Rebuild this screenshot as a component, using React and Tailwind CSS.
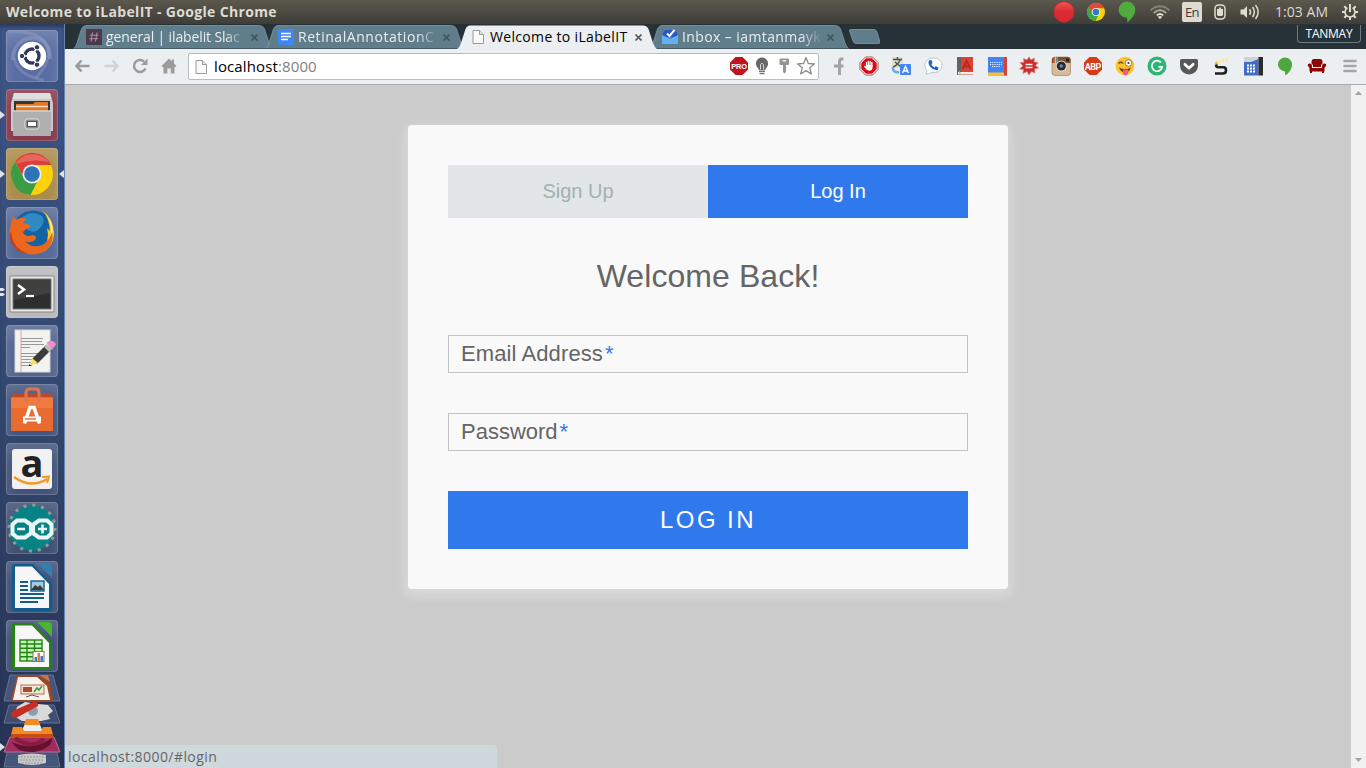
import React from "react";

const UI = "font-['Open_Sans','Noto_Sans',sans-serif]";

function Svg({ w = 20, h = 20, vb, children, className = "" }) {
  return (
    <svg width={w} height={h} viewBox={vb || `0 0 ${w} ${h}`} className={`block shrink-0 ${className}`}>
      {children}
    </svg>
  );
}

function ChromeLogo({ size }) {
  return (
    <Svg w={size} h={size} vb="0 0 42 42">
      <circle cx="21" cy="21" r="21" fill="#fcd209" />
      <path d="M3 10 A21 21 0 0 1 39.8 12 H21 L13 26Z" fill="#dd4b3e" />
      <path d="M3 10 L13 25.5 Q18 31 26 30 L20 42 A21 21 0 0 1 3 10Z" fill="#3fa648" />
      <circle cx="21" cy="21" r="9.6" fill="#f4f4f4" />
      <circle cx="21" cy="21" r="7.6" fill="#2f78c2" />
    </Svg>
  );
}

function HangoutsBalloon() {
  return (
    <Svg w={18} h={22}>
      <path d="M9 .5a8.3 8.3 0 0 0-8.3 8.4C.7 13 4.500 16.500 9 16.600L9.400 21.500C13 18 17.300 14 17.300 8.900A8.300 8.300 0 0 0 9 .5Z" fill="#4fab3e" />
    </Svg>
  );
}

/* ---------- system panel ---------- */
function Panel() {
  return (
    <div className={`flex h-6 shrink-0 items-center justify-between bg-linear-to-b from-[#5b584d] to-[#3e3d38] pl-[6px] text-[#dfdbd2] ${UI}`}>
      <span className="text-[14px] font-bold leading-6 tracking-[0.33px] whitespace-nowrap">Welcome to iLabelIT - Google Chrome</span>
      <div className="flex h-6 items-center">
        <Svg w={22} h={22} className="mr-[12px]">
          <defs>
            <linearGradient id="rec" x1="0" y1="0" x2="0" y2="1">
              <stop offset="0" stopColor="#ef5557" />
              <stop offset=".5" stopColor="#d92a30" />
              <stop offset="1" stopColor="#d62b33" />
            </linearGradient>
          </defs>
          <circle cx="11" cy="11" r="10.4" fill="url(#rec)" stroke="#a82828" strokeWidth=".6" />
        </Svg>
        <span className="mr-[13px]"><ChromeLogo size={18} /></span>
        <span className="mr-[14px]"><HangoutsBalloon /></span>
        <Svg w={20} h={16} className="mr-[12px]">
          <g fill="none" stroke="#85827a" strokeWidth="1.8">
            <path d="M.6 6.2Q10-1.8 19.4 6.2" />
            <path d="M3.8 9Q10 3.6 16.2 9" stroke="#aaa79e" />
            <path d="M6.8 11.4Q10 8.6 13.2 11.4" stroke="#dfdbd2" />
          </g>
          <path d="M7.8 12.8Q10 11 12.2 12.8L10 15.2Z" fill="#dfdbd2" />
        </Svg>
        <span className="mr-[12px] flex h-5 w-5 items-center justify-center rounded-[2px] bg-[#dfdbd2] text-[13px] leading-5 tracking-[-0.5px] text-[#3c3b37]">En</span>
        <Svg w={12} h={16} className="mr-[14px]">
          <rect x="1" y="1" width="10" height="14" rx="3.500" fill="none" stroke="#dfdbd2" strokeWidth="1.500" />
          <path d="M3 5H5V3.500H7V5H9V11L8 12H4L3 11Z" fill="#dfdbd2" />
        </Svg>
        <Svg w={20} h={16} className="mr-[15px]">
          <path d="M.5 5.5H3.5L7 2V14L3.5 10.5H.5Z" fill="#dfdbd2" />
          <g fill="none" stroke="#dfdbd2" strokeWidth="1.5">
            <path d="M9.5 5.2Q11.7 8 9.5 10.8" />
            <path d="M12.5 3Q16.2 8 12.5 13" />
            <path d="M15.5 1Q20.8 8 15.5 15" />
          </g>
        </Svg>
        <span className="w-[55px] text-[14px] leading-6 tracking-[0.05px] whitespace-nowrap">1:03 AM</span>
        <Svg w={16} h={16} className="mr-[8px] ml-[12px]">
          <g stroke="#dfdbd2" strokeWidth="2">
            <path d="M8 0V8M8 13V16M0 8H3M13 8H16M2.300 2.300L4.500 4.500M11.500 11.500L13.700 13.700M13.700 2.300L11.500 4.500M4.500 11.500L2.300 13.700" />
          </g>
          <path d="M5.400 3.800A5 5 0 1 0 10.600 3.800" fill="none" stroke="#dfdbd2" strokeWidth="1.600" />
        </Svg>
      </div>
    </div>
  );
}

/* ---------- launcher ---------- */
const doc = (stroke, corner) => (
  <>
    <path d="M9 3H27L46 23V47Q46 50 43 50H9Q6 50 6 47V6Q6 3 9 3Z" fill={stroke} />
    <path d="M9 5.5H26L43 23V47H9Z" fill="#f7f7f7" />
    <path d="M31 2H42Q46 2 46 6V17Z" fill={corner} />
  </>
);

const launcherItems = [
  {
    tile: "bg-[#5a6da2]",
    art: (
      <>
        <path d="M7 30C6 12 24 3 35 10Q44 14 44 29" fill="none" stroke="#8997bf" strokeWidth="4" opacity=".6" />
        <path d="M2 2Q32 0 40 14T30 48" fill="none" stroke="#9aa6ca" strokeWidth="3" opacity=".35" />
        <path d="M8 28Q12 46 38 50" fill="none" stroke="#8997bf" strokeWidth="3" opacity=".5" />
        <circle cx="26" cy="26" r="14.2" fill="#fff" />
        <circle cx="26" cy="26" r="7" fill="none" stroke="#30395d" strokeWidth="3.4" />
        <g stroke="#fff" strokeWidth="1.6"><path d="M26 26H15M26 26L31.5 16.5M26 26L31.5 35.5" /></g>
        <circle cx="26" cy="26" r="5.2" fill="#fff" />
        <g fill="#30395d" stroke="#fff" strokeWidth="1"><circle cx="16" cy="26" r="2.7" /><circle cx="31" cy="17.3" r="2.7" /><circle cx="31" cy="34.7" r="2.7" /></g>
      </>
    ),
  },
  {
    tile: "bg-[#863a4c]",
    left: 1,
    art: (
      <>
        <path d="M8 4H44L47 14V42H5V14Z" fill="#c9c9c9" />
        <path d="M8 4H44L45.5 10H6.5Z" fill="#dedede" />
        <rect x="8" y="12" width="36" height="11" fill="#373737" />
        <path d="M10 15H27L29 13H42V23H10Z" fill="#e47824" />
        <path d="M10 17.5H42" stroke="#f6e6c8" strokeWidth="1.4" />
        <rect x="7" y="21.500" width="38" height="25.500" rx="1" fill="#b0b0b0" />
        <path d="M7 22H45" stroke="#e4e4e4" />
        <rect x="19" y="30" width="14" height="10" rx="2.5" fill="#8d8d8d" stroke="#dedede" />
        <rect x="21.5" y="32.5" width="9" height="5" fill="#fff" stroke="#515151" />
      </>
    ),
  },
  {
    tile: "bg-[#ab8c4b]",
    left: 1,
    right: true,
    art: (
      <>
        <circle cx="26" cy="26" r="21" fill="#fdd10b" />
        <path d="M9 13.7A21 21 0 0 1 45.2 17H26L17 28Z" fill="#dc3e38" />
        <path d="M9 13.7L18 30Q21 35 31 34L24.5 47A21 21 0 0 1 9 13.7Z" fill="#3c9c43" />
        <path d="M9 16A21 21 0 0 1 43 14Q26 10 9 16Z" fill="#f08c86" opacity=".5" />
        <circle cx="26" cy="26" r="9.5" fill="#f1f1f1" />
        <circle cx="26" cy="26" r="7.8" fill="#2d74b8" />
      </>
    ),
  },
  {
    tile: "bg-[#566a98]",
    art: (
      <>
        <circle cx="27" cy="24" r="20.500" fill="#1362a2" />
        <path d="M15 12Q24 2 36 9Q40 15 34 21Q28 29 18 20Z" fill="#41a5d6" opacity=".6" />
        <path d="M37 4Q48 12 48 27Q47 42 34 46Q45 34 41 21L44 24Q43 11 37 4Z" fill="#ffc61f" />
        <path d="M41 9Q47 18 44 32L47 25Q46 14 41 9Z" fill="#fff2a3" />
        <path d="M7 9Q8 13 12 12Q16 9 20 12L17 16L24 18Q25 21 20 22L17 25Q19 31 27 28Q32 29 29 33Q24 37 19 34Q26 42 36 38Q43 35 46 25Q49 39 37 45Q25 51 13 43Q0 33 5 17Z" fill="#ec671d" />
        <path d="M5 24Q6 42 23 47Q10 46 5 35Q3 29 5 24Z" fill="#c33d18" />
      </>
    ),
  },
  {
    tile: "bg-[#b9b9bd]",
    left: 2,
    art: (
      <>
        <rect x="4" y="10" width="44" height="36" rx="1" fill="#e7e7e7" stroke="#858585" />
        <rect x="7" y="13" width="38" height="30" fill="#2e2e2e" stroke="#777" />
        <path d="M8 14H44V27L8 34Z" fill="#4c4c4c" opacity=".6" />
        <path d="M12 19L18 23.5L12 28" fill="none" stroke="#fff" strokeWidth="2.6" />
        <path d="M20 30H28" stroke="#fff" strokeWidth="2.2" />
      </>
    ),
  },
  {
    tile: "bg-[#54668f]",
    art: (
      <>
        <rect x="9" y="5" width="35" height="42" fill="#f2f2ef" stroke="#d5d5d5" />
        <path d="M15 5V47" stroke="#efa3a3" />
        <g stroke="#999"><path d="M15 13.500H37M15 16.500H36M15 19.500H38M15 22.500H24M15 28.500H36M15 31.500H34M15 34.500H30M15 37.500H26M15 40.500H24" /></g>
        <path d="M26 34L40 20L45 25L31 39Z" fill="#3b3b39" />
        <path d="M38 22L41 19L46 24L43 27Z" fill="#bdbdb6" />
        <path d="M42 18Q46 15 49 19L46 23Z" fill="#ef8eca" stroke="#ef8eca" strokeWidth="2" />
        <path d="M26 33L32 38L24 41Z" fill="#f2e16a" /><path d="M23 39L26 41H23Z" fill="#111" />
      </>
    ),
  },
  {
    tile: "bg-[#44567f]",
    art: (
      <>
        <path d="M7 9L5 16H47L45 9Z" fill="#b9492a" />
        <rect x="5" y="13" width="42" height="34" rx="1" fill="#e96b30" />
        <rect x="5" y="14" width="42" height="10" fill="#f38650" opacity=".6" />
        <path d="M20 18V9Q20 5 24 5H30Q33 5 33 9V18" fill="none" stroke="#e2754f" strokeWidth="3" />
        <path d="M18.500 39.500L24 23.500H28L33.500 39.500" fill="none" stroke="#fff" strokeWidth="3.500" />
        <path d="M17 35H35" stroke="#fff" strokeWidth="5" />
        <path d="M19 35H30" stroke="#e96b30" strokeWidth="1.400" />
      </>
    ),
  },
  {
    tile: "bg-[#435379]",
    art: (
      <>
        <rect x="6" y="6" width="40" height="40" rx="3" fill="#f1f1f1" />
        <text x="26" y="33.500" textAnchor="middle" fontFamily="Open Sans" fontWeight="700" fontSize="38" fill="#222">a</text>
        <path d="M8 34Q25 46 41 36" fill="none" stroke="#f7981d" strokeWidth="2.6" />
        <path d="M36 34L43 33.5L41 40" fill="none" stroke="#f7981d" strokeWidth="2" />
      </>
    ),
  },
  {
    tile: "bg-[#414f73]",
    art: (
      <>
        <circle cx="26" cy="26" r="23" fill="#078385" />
        <circle cx="26" cy="26" r="23" fill="none" stroke="#8f9c98" strokeWidth="3" strokeDasharray="3 6" />
        <path d="M24 22L19 18.500H11L6.500 22.500V31.500L11 35.500H19L24 32L26 29L28 32L33 35.500H41L45.500 31.500V22.500L41 18.500H33L28 22L26 25Z" fill="#078385" stroke="#eaf6f6" strokeWidth="4" />
        <path d="M23 24H29V30H23Z" fill="#eaf6f6" />
        <path d="M11 27H19M32 27H41M36.500 22.500V31.500" stroke="#eaf6f6" strokeWidth="2.6" />
      </>
    ),
  },
  {
    tile: "bg-[#3f4f77]",
    art: (
      <>
        {doc("#135b8c", "#347eae")}
        <path d="M14 21H22M14 25H22M14 29H22M14 33H38M14 37H38M14 41H32" stroke="#135b8c" strokeWidth="2" />
        <rect x="25" y="20" width="13" height="10" fill="#9fcbe4" stroke="#135b8c" strokeWidth="1.4" />
        <path d="M25 29L29 24L32 26L34 24L38 29Z" fill="#3c3b31" />
      </>
    ),
  },
  {
    tile: "bg-[#3f4f75]",
    art: (
      <>
        {doc("#238414", "#4ab436")}
        <rect x="14" y="20" width="22" height="21" fill="#c6f3b5" stroke="#238414" strokeWidth="1.4" />
        <path d="M14 24H36M14 28.3H36M14 32.5H36M14 36.7H36M21 20V41M28.5 20V41" stroke="#238414" strokeWidth="1.4" />
        <rect x="27" y="31.500" width="11" height="10" fill="#fff" stroke="#777" />
        <rect x="28.500" y="37" width="2.600" height="4" fill="#3b7fc0" /><rect x="31.500" y="33" width="2.600" height="8" fill="#ef7d1d" /><rect x="34.500" y="36" width="2.600" height="5" fill="#3b7fc0" />
      </>
    ),
  },
];

function Launcher() {
  return (
    <aside className="relative flex w-[65px] shrink-0 flex-col gap-[7px] border-r border-[#6b82ac] bg-linear-to-b from-[#3e5687] via-[#33486f] via-50% to-[#263252] pt-[6px] shadow-[inset_0_4px_4px_-2px_#243256]">
      {launcherItems.map((it, i) => (
        <div key={i} className="relative ml-[6px] h-[52px] w-[52px] shrink-0">
          <div className={`h-full w-full rounded-[4px] shadow-[inset_0_0_0_1px_rgba(255,255,255,0.16),inset_0_10px_14px_rgba(255,255,255,0.16)] ${it.tile}`}>
            <Svg w={52} h={52}>{it.art}</Svg>
          </div>
          {it.left === 1 && <Svg w={5} h={8} className="absolute top-[22px] -left-[6px]"><path d="M0 0L5 4L0 8Z" fill="#dfe2e8" /></Svg>}
          {it.left === 2 && <Svg w={5} h={8} className="absolute top-[22px] -left-[6px]"><path d="M0 0H3L5 1.500L3 3H0ZM0 5H3L5 6.500L3 8H0Z" fill="#dfe2e8" /></Svg>}
          {it.right && <Svg w={5} h={8} className="absolute top-[22px] left-[53px]"><path d="M5 0L0 4L5 8Z" fill="#dfe2e8" /></Svg>}
        </div>
      ))}
      <Svg w={64} h={96} className="-mt-[6px]">
        <path d="M10 65H54L60 94H4Z" fill="#46557b" stroke="#65738f" />
        <path d="M18 82Q32 79 46 82V90Q32 94 18 90Z" fill="#c9c9c9" /><path d="M18 84H46M20 87H44M22 90H42" stroke="#999" strokeDasharray="2 1" />
        <path d="M9 32H54L60 50H4Z" fill="#3f4e73" stroke="#65738f" />
        <path d="M17 34L25 29L38 31L48 32L53 38L48 42L50 46L41 48L22 48L14 43Z" fill="#dadada" />
        <circle cx="33" cy="38" r="5" fill="#909aaf" />
        <path d="M12 44Q9 39 15 37L33 29Q39 28 38 33L16 45Z" fill="#c72c25" />
        <path d="M10 64H54L60 79H4Z" fill="#a32c5e" stroke="#c56a91" />
        <path d="M12 69Q32 79 52 65Q53 75 34 79Q17 80 12 69Z" fill="#64102f" /><path d="M15 65Q32 77 44 66" fill="none" stroke="#8d1b40" strokeWidth="4" />
        <path d="M27 47H38L43 59H21Z" fill="#eee" /><path d="M26 46H38L40 52H24Z" fill="#f28a25" />
        <path d="M13 54H22L24 58H41L43 54H51L53 62H11Z" fill="#f18a24" /><path d="M11 61H53V64H12Z" fill="#c64c12" />
        <path d="M10 2H53L60 28H4Z" fill="#45557c" stroke="#65738f" />
        <path d="M17 2H41L50 10L53 26Q53 29 49 29H14Q10 29 11 26Z" fill="#9a4727" />
        <path d="M18 4H37L47 13L50 27H13Z" fill="#f6f3ef" /><path d="M39 2H48L50 9Z" fill="#bf7552" />
        <rect x="21" y="12" width="23" height="9" fill="#fbe4d5" stroke="#c06a48" /><rect x="23" y="14" width="9" height="5" fill="#a64d2c" /><path d="M34 19L37 15L39 17L42 13" fill="none" stroke="#2e9b45" strokeWidth="1.500" /><path d="M26 24L32 22L39 24" fill="none" stroke="#555" />
        <path d="M0 70L5 74L0 78Z" fill="#dfe2e8" />
      </Svg>
    </aside>
  );
}

/* ---------- browser tabs ---------- */
const PageIcon = () => (
  <Svg w={16} h={16}>
    <path d="M3 1.500H9.500L13.500 5.500V14.500H3Z" fill="#fafafa" stroke="#999" />
    <path d="M9.500 1.500V5.500H13.500" fill="#e6e6e6" stroke="#999" />
  </Svg>
);

const tabs = [
  {
    title: "general | ilabelit Slac",
    track: "tracking-[-0.13px]",
    icon: (
      <Svg w={16} h={16}>
        <rect width="16" height="16" fill="#4d394b" />
        <path d="M6.500 3.500L5 12.500M11 3.500L9.500 12.500M3.800 6.200H12.500M3.300 9.700H12" stroke="#a58fa3" strokeWidth="1.100" />
      </Svg>
    ),
  },
  {
    title: "RetinalAnnotationC",
    track: "tracking-[0.55px]",
    icon: (
      <Svg w={16} h={16}>
        <rect width="16" height="16" rx="1.500" fill="#4285f4" />
        <path d="M3 4.500H13M3 7.500H13M3 10.500H10" stroke="#fff" strokeWidth="1.400" />
      </Svg>
    ),
  },
  { title: "Welcome to iLabelIT", active: true, track: "tracking-[0.33px]", icon: <PageIcon /> },
  {
    title: "Inbox – iamtanmayk",
    track: "tracking-[0.4px]",
    icon: (
      <Svg w={16} h={16}>
        <path d="M0 6L3 1H13L16 6V8H0Z" fill="#2a56c6" />
        <path d="M0 6L8 10L16 6V14Q16 15 15 15H1Q0 15 0 14Z" fill="#63b0f5" />
        <path d="M5 4.500L7.500 7L12.500 1" fill="none" stroke="#fff" strokeWidth="2" />
      </Svg>
    ),
  },
];

function Tab({ tab }) {
  const a = tab.active;
  return (
    <div className={`relative -mr-[8px] h-6 w-[200px] shrink-0 ${a ? "z-10" : ""}`}>
      <Svg w={200} h={24} className="absolute inset-0">
        <path d="M0 24C2 23 3 21 4 18L8.500 4Q10 .5 13 .5H186Q190 .5 191.500 4L196 18Q198 23 200 24Z" fill={a ? "#eceff1" : "#607d8b"} stroke={a ? "none" : "#8399a4"} strokeWidth=".8" />
        {!a && <path d="M0 23.500H200" stroke="#455a64" />}
      </Svg>
      <div className="relative flex h-6 items-center pl-[13px]">
        {tab.icon}
        <span className={`ml-[4px] w-[140px] text-[14px] leading-6 whitespace-nowrap ${tab.track} ${UI} ${a ? "text-black" : "mask-r-from-85% text-[#e9eef0]"}`}>{tab.title}</span>
        <Svg w={9} h={9} className="ml-[4px]">
          <path d="M1.500 1.500L7.500 7.500M7.500 1.500L1.500 7.500" stroke={a ? "#555" : "#40535d"} strokeWidth="1.700" />
        </Svg>
      </div>
    </div>
  );
}

function TabStrip() {
  return (
    <div className="flex h-[25px] shrink-0 bg-[#263238] pt-px pl-[8px]">
      {tabs.map((t) => <Tab key={t.title} tab={t} />)}
      <Svg w={32} h={16} className="mt-[4px] ml-[7px]">
        <path d="M3 .5H26Q28 .5 29 3L32 13Q32.500 14.500 30 14.500H8Q6 14.500 5 12L1.500 2Q1 .5 3 .5Z" fill="#607d8b" stroke="#8399a4" strokeWidth=".8" />
      </Svg>
      <div className={`mr-[5px] ml-auto flex h-[18px] w-[64px] items-center justify-center rounded-b-[4px] border border-t-0 border-[#6c7a82] bg-[#263238] text-[12px] tracking-[-0.25px] text-white ${UI}`}>TANMAY</div>
    </div>
  );
}

/* ---------- toolbar ---------- */
const extensions = [
  <path key="f" d="M11 19V11.500H7V8.500H11V6.500Q11 1.500 14.500 1.500H16.500V4.500H15Q14 4.500 14 6.500V8.500H16.500V11.500H14V19Z" fill="#a3a3a3" />,
  <g key="hand">
    <path d="M6.500 1H13.500L19 6.500V13.500L13.500 19H6.500L1 13.500V6.500Z" fill="#fff" stroke="#8d2a2a" strokeWidth=".8" />
    <path d="M7 2.300H13L17.700 7V13L13 17.700H7L2.300 13V7Z" fill="#dc0c12" />
    <path d="M7.500 10V6.500M9.300 9V5.300M11.100 9V5.300M12.900 10V6.500M5.800 10.500L8 13" stroke="#fff" strokeWidth="1.300" strokeLinecap="round" />
    <path d="M6.900 9H13.500V12Q13 14.800 10.300 14.800Q8 14.800 6.900 12Z" fill="#fff" />
  </g>,
  <g key="tr">
    <rect x="1" y="1" width="11" height="11" fill="#e4dfc9" />
    <path d="M2 3.500H11M6.500 1V3.500M9 4Q7 9 2 11M4 6L10 11" stroke="#46505c" strokeWidth="1.400" fill="none" />
    <path d="M2 11V13Q3 17 8 16" fill="none" stroke="#6ca6ed" strokeWidth="2.500" />
    <rect x="9" y="8" width="11" height="11" rx="1" fill="#4285f4" />
    <path d="M11.500 17L14.500 10.500L17.500 17M12.500 15H16.500" fill="none" stroke="#fff" strokeWidth="1.400" />
  </g>,
  <g key="ph">
    <path d="M10 2C15.500 2 19 5 19 9.300S15.500 17 10 16.500L3 18L4 14.500C-1 9 3 2 10 2Z" fill="#fff" stroke="#bcc6d2" />
    <path d="M6 4.500L8.500 4L9.500 7L8.300 8Q9 10.500 11.500 11.500L12.700 10.300L15.500 11.500L15 13.800Q11 15 7.500 11Q4.500 7.500 6 4.500Z" fill="#1d62c6" />
  </g>,
  <g key="bk">
    <path d="M2 1H18V19H2Z" fill="#db4437" /><path d="M2 1H6V19H2Z" fill="#626262" />
    <path d="M7.500 13L11.500 4.500L15.500 13M9 10.500H14" fill="none" stroke="#b8281f" strokeWidth="1.800" />
    <path d="M3 16H18V18.500H3Z" fill="#f1eeee" /><path d="M4 14.500V19L6 17.500Z" fill="#fbb91c" />
  </g>,
  <g key="kb">
    <rect x="1" y="1" width="19" height="18.500" fill="#4285f4" /><path d="M1 16.500H17V19.500H1Z" fill="#fbc02d" /><path d="M17 1H20V19.500H17Z" fill="#d44336" />
    <path d="M3 6.500H15M3 8.500H15M5 10.500H13" stroke="#e8f0fe" strokeWidth="1.100" strokeDasharray="1 .8" />
  </g>,
  <g key="sp">
    <path d="M10 1L12 4L15.500 2L15 6L19 6.500L16.500 9.500L19.500 12L15.500 13L16 17L12.500 15.500L10 19L8 15.500L4 17.500L4.500 13.500L.5 13L4 10L1 6.500L5 6.500L4.500 2.500L8 4Z" fill="#c92d2d" stroke="#de7b72" strokeWidth=".7" />
    <path d="M6.500 8.500H13.500M6.500 11.500H13.500" stroke="#fff0ea" strokeWidth="1.500" />
  </g>,
  <g key="ig">
    <rect x="1" y="1" width="18.500" height="18.500" rx="3" fill="#d8b99a" stroke="#94755b" strokeWidth=".6" /><path d="M1 7V4Q1 1 4 1H16.500Q19.500 1 19.500 4V7Z" fill="#7d5134" />
    <path d="M3 1.200V7" stroke="#e84a3f" strokeWidth="1.500" /><path d="M4.500 1V7" stroke="#f2c22b" strokeWidth="1.500" /><path d="M6.200 1V7" stroke="#3fb1c6" strokeWidth="1.500" />
    <circle cx="10.300" cy="10" r="5.500" fill="#e8ddd0" /><circle cx="10.300" cy="10" r="4.600" fill="#272a2f" /><circle cx="10.300" cy="10" r="1.800" fill="#6a88a5" /><rect x="15" y="2.500" width="3" height="3" fill="#2d201b" />
  </g>,
  <g key="abp">
    <path d="M6.500 1H13.500L19 6.500V13.500L13.500 19H6.500L1 13.500V6.500Z" fill="#d63a17" />
    <text x="9.800" y="13.500" textAnchor="middle" fontFamily="Roboto" fontWeight="700" fontSize="9" letterSpacing="-.5" fill="#fff">ABP</text>
  </g>,
  <g key="em">
    <circle cx="10" cy="10" r="9.300" fill="#fcc32c" /><circle cx="13.500" cy="7" r="3.300" fill="#fff" stroke="#8f5c17" strokeWidth=".8" /><circle cx="13.500" cy="7" r="1.100" fill="#333" />
    <path d="M3.500 7.500Q6 5 8 7.500" fill="none" stroke="#774818" strokeWidth="1.300" /><path d="M4 11.500Q10 14.500 16 11.500Q14 17 10 16.500Q6 16.500 4 11.500Z" fill="#7c3b15" /><path d="M8 13.500H13V17Q12.500 19.500 10.500 19.500T8 17Z" fill="#ef5b83" />
  </g>,
  <g key="gr">
    <circle cx="10" cy="10" r="9.500" fill="#2bb673" />
    <path d="M14 6.500A5.200 5.200 0 1 0 12.500 14.600Q15 13.500 15 10.800H11.500" fill="none" stroke="#fff" strokeWidth="1.800" />
  </g>,
  <g key="pk">
    <path d="M2.500 3H17.500Q19 3 19 4.500V10A9 8.500 0 0 1 1 10V4.500Q1 3 2.500 3Z" fill="#585858" />
    <path d="M5.800 8.200L10 12.200L14.200 8.200" fill="none" stroke="#fff" strokeWidth="2.600" strokeLinecap="round" strokeLinejoin="round" />
  </g>,
  <g key="s">
    <path d="M5.200 7.500V9.500Q5.200 11.200 7.500 11.200H12.500Q15 11.200 15 14.300Q15 17.500 12 17.500H4" fill="none" stroke="#202020" strokeWidth="2.600" />
    <path d="M4 6.500L6.500 5V8L4 9Z" fill="#f4b921" /><path d="M7.500 3.500H9.500V7.500H7.500ZM11 2.500H13V6.500H11ZM14.500 1.500H16.500V6H14.500Z" fill="#f6eaa0" />
  </g>,
  <g key="ca">
    <rect x="1" y="1" width="14.500" height="18.500" fill="#3d6fc8" /><path d="M1 1H15.500V3L8 6H1Z" fill="#cfd3d6" /><rect x="15.500" y="1" width="4.500" height="18.500" fill="#2b2b2d" />
    <path d="M4 9.500H12M4 12.500H12M4 15.500H12" stroke="#fff" strokeWidth="2" strokeDasharray="2 1" />
  </g>,
  <path key="ho" d="M10 1.500A7 7 0 0 0 3 8.500C3 12 6 14.800 9.700 15.200L10.500 19.500C13.500 17 17 13.500 17 8.500A7 7 0 0 0 10 1.500Z" fill="#4fa83d" />,
  <g key="so" fill="#8c0606">
    <path d="M4.500 7.500Q4 3 7 3H13Q16 3 15.500 7.500L14 9V11H6V9Z" /><path d="M.7 9.500Q.5 7.300 3 7.500Q5 7.700 5 10V12H15V10Q15 7.700 17 7.500Q19.500 7.300 19.300 9.500L17.500 12V15.500H2.500V12Z" />
    <path d="M3 15H5V17H3ZM15 15H17V17H15Z" /><path d="M5 11.500H15" stroke="#eceff1" strokeWidth=".8" />
  </g>,
];

function Toolbar() {
  return (
    <div className="flex h-9 shrink-0 items-center border-b border-[#a9abad] bg-[#eceff1] pb-px pl-[7px]">
      <Svg w={20} h={20} className="mr-[9px]"><path d="M9.500 4.500L4.500 10L9.500 15.500M5 10H17.500" fill="none" stroke="#9b9b9b" strokeWidth="2.600" /></Svg>
      <Svg w={20} h={20} className="mr-[9px]"><path d="M11.500 4.500L16.500 10L11.500 15.500M16 10H3.500" fill="none" stroke="#d0d3d4" strokeWidth="2.400" /></Svg>
      <Svg w={20} h={20} className="mr-[9px]"><path d="M15.500 12.500A6 6 0 1 1 14 5.500" fill="none" stroke="#9b9b9b" strokeWidth="2.500" /><path d="M17.500 2.500V9H11Z" fill="#9b9b9b" /></Svg>
      <Svg w={20} h={20} className="mr-[9px]"><path d="M10 2.500L12.800 5.300V3.500H15V7.500L17.500 10L16.500 11H15.500V17.500H11.700V12.500H8.300V17.500H4.500V11H3.500L2.500 10Z" fill="#9b9b9b" /></Svg>
      <div className="mt-px flex h-[27px] w-[631px] shrink-0 items-center rounded-[2px] border border-[#b9bcbe] bg-white pl-[4px]">
        <PageIcon />
        <span className={`-mt-px ml-[5px] flex-1 text-[15px] tracking-[0.12px] text-black ${UI}`}>localhost<span className="text-[#808080]">:8000</span></span>
        <Svg w={20} h={20} className="-mt-px mr-[3px]">
          <path d="M6.500 1H13.500L19 6.500V13.500L13.500 19H6.500L1 13.500V6.500Z" fill="#c1131e" />
          <text x="10" y="12.700" textAnchor="middle" fontFamily="Liberation Sans" fontSize="7.500" fontWeight="700" letterSpacing="-.3" fill="#fff">PRO</text>
        </Svg>
        <Svg w={20} h={20} className="-mt-px mr-[2px]">
          <path d="M10 1.500A6 6 0 0 1 14.500 11.500L13 14H7L5.500 11.500A6 6 0 0 1 10 1.500Z" fill="#686868" /><path d="M8.500 13.500V8.500Q10 6 11.500 8.500V13.500" fill="none" stroke="#d8d8d8" /><path d="M7 15.300H13M7.500 17.500H12.500" stroke="#777" strokeWidth="1.600" />
        </Svg>
        <Svg w={20} h={20} className="-mt-px mr-[2px]">
          <path d="M6.500 2.500H14Q15 2.500 15 4V8Q15 9 13.500 9H12V16L10.500 17.500L9 16V9H7Q5.500 9 5.500 8V4Q5.500 2.500 6.500 2.500Z" fill="#969696" /><path d="M8.500 4.800H12" stroke="#fff" strokeWidth="1.300" />
        </Svg>
        <Svg w={20} h={20} className="-mt-px mr-[2px]">
          <path d="M10 1.500L12.300 7.500L18.500 7.800L13.800 11.800L15.300 18L10 14.600L4.700 18L6.200 11.800L1.500 7.800L7.700 7.500Z" fill="#fff" stroke="#8b8b8b" strokeWidth="1.300" strokeLinejoin="round" />
        </Svg>
      </div>
      <div className="ml-[8px] flex gap-[12px]">
        {extensions.map((e, i) => <Svg key={i} w={20} h={20}>{e}</Svg>)}
      </div>
      <Svg w={14} h={14} className="ml-[16px]">
        <path d="M1.500 2H12.500M1.500 7H12.500M1.500 12H12.500" stroke="#a5a5a5" strokeWidth="2.600" strokeLinecap="round" />
      </Svg>
    </div>
  );
}

/* ---------- page ---------- */
function Field({ label, className = "" }) {
  return (
    <div className={`mt-[40px] h-[38px] border border-[#c3c3c3] pl-[12px] text-[22px] leading-[36px] text-[#656565] ${className}`}>
      {label}<span className="ml-[2px] tracking-normal text-[#3079ed]">*</span>
    </div>
  );
}

function LoginPage() {
  return (
    <div className="relative flex min-h-0 flex-1 bg-[#cbcbcb] font-['Liberation_Sans',Arial,sans-serif]">
      <main className="flex flex-1 justify-center pt-[40px]">
        <section className="flex h-[464px] w-[600px] flex-col rounded-[4px] bg-[#f9f9f9] p-[40px] shadow-[0_4px_10px_4px_rgba(248,248,248,0.3)]">
          <div className="flex h-[53px] text-[20px] leading-[53px]">
            <div className="flex-1 bg-[#e2e6e6] text-center text-[#a0b3b0]">Sign Up</div>
            <div className="flex-1 bg-[#3079ed] text-center text-white">Log In</div>
          </div>
          <h1 className="mt-[40px] text-center text-[32px] leading-[37px] tracking-[0.08px] text-[#656565]">Welcome Back!</h1>
          <Field label="Email Address" className="tracking-[0.1px]" />
          <Field label="Password" />
          <button className="mt-[40px] h-[58px] bg-[#3079ed] text-[24px] leading-[58px] tracking-[2.4px] text-white">LOG IN</button>
        </section>
      </main>
      <div className="flex w-[15px] flex-col items-center justify-between bg-[#f1f1f1] py-[5px]">
        <Svg w={7} h={5}><path d="M0 5L3.500 1L7 5Z" fill="#a3a3a3" /></Svg>
        <Svg w={7} h={5}><path d="M0 0L3.500 4L7 0Z" fill="#a3a3a3" /></Svg>
      </div>
      <div className={`absolute bottom-0 left-0 h-[23px] w-[432px] rounded-tr-[4px] bg-[#cfd8dc] pl-[3px] text-[14px] leading-[24px] tracking-[0.43px] text-[#666] ${UI}`}>localhost:8000/#login</div>
    </div>
  );
}

export default function App() {
  return (
    <div className="flex h-[768px] w-[1366px] flex-col overflow-hidden">
      <Panel />
      <div className="flex min-h-0 flex-1">
        <Launcher />
        <div className="flex min-w-0 flex-1 flex-col">
          <TabStrip />
          <Toolbar />
          <LoginPage />
        </div>
      </div>
    </div>
  );
}
